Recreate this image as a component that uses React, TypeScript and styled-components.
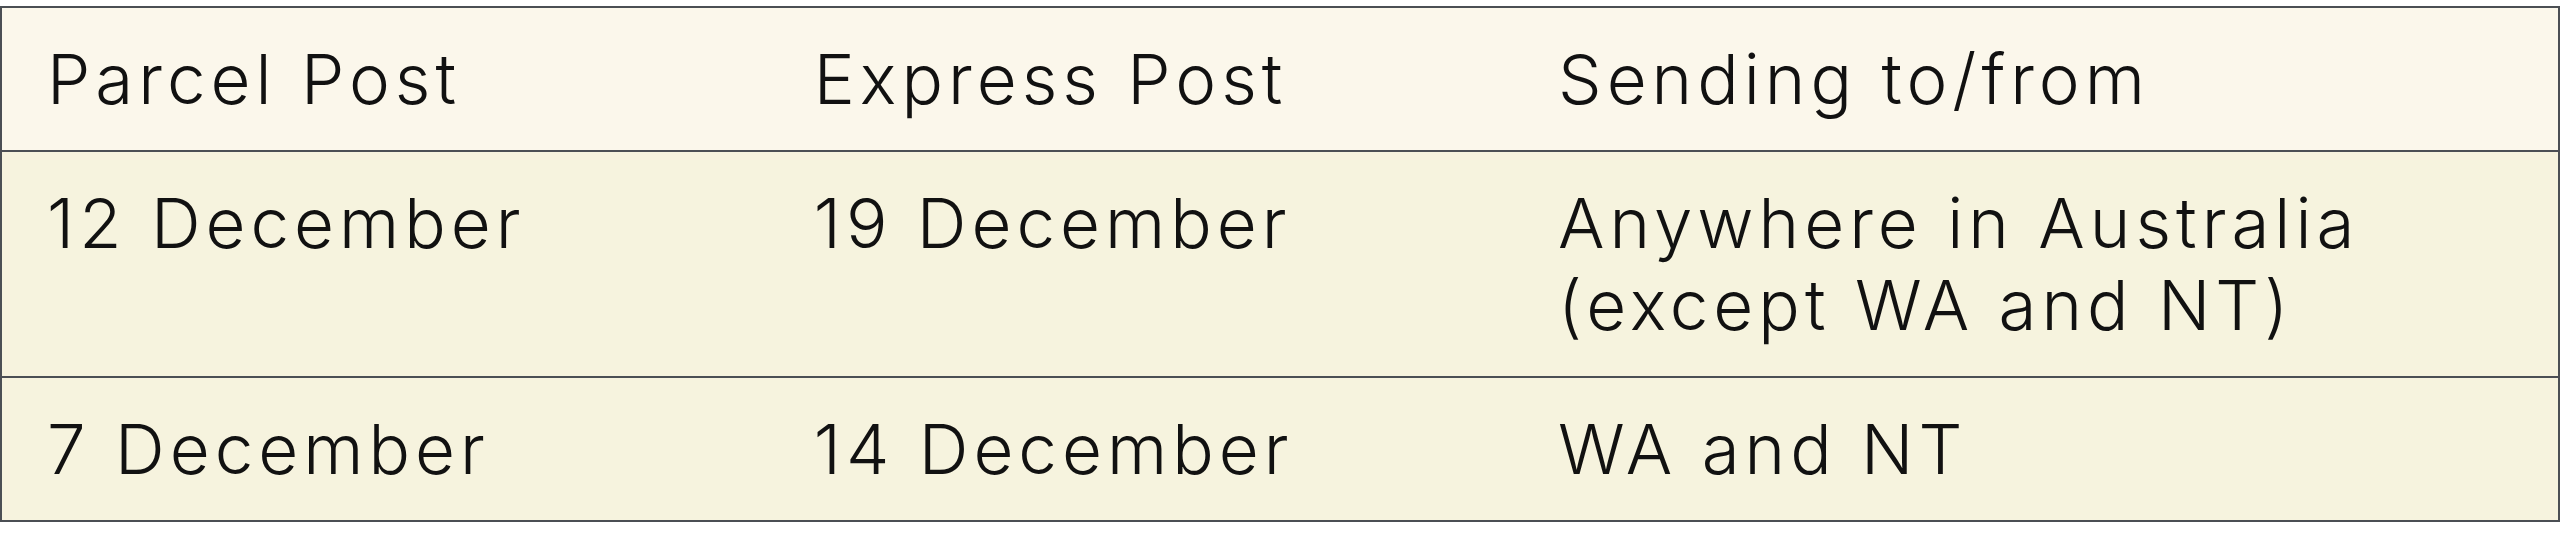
import styled, { createGlobalStyle } from 'styled-components';

const GlobalStyle = createGlobalStyle`
  html, body {
    margin: 0;
    padding: 0;
    background: #ffffff;
  }
`;

type Row = { parcel: string; express: string; place: string[] };

const rows: Row[] = [
  { parcel: '12 December', express: '19 December', place: ['Anywhere in Australia', '(except WA and NT)'] },
  { parcel: '7 December', express: '14 December', place: ['WA and NT'] },
];

const App = () => {
  return (
    <>
      <GlobalStyle />
      <Wrapper>
        <Table>
          <HeadRow>
            <Cell>Parcel Post</Cell>
            <Cell>Express Post</Cell>
            <Cell>Sending to/from</Cell>
          </HeadRow>
          {rows.map((row) => (
            <BodyRow key={row.parcel}>
              <Cell>{row.parcel}</Cell>
              <Cell>{row.express}</Cell>
              <Cell>
                {row.place.map((line) => (
                  <Line key={line}>{line}</Line>
                ))}
              </Cell>
            </BodyRow>
          ))}
        </Table>
      </Wrapper>
    </>
  );
};

const Wrapper = styled.div`
  width: 2560px;
  height: 554px;
  padding-top: 6px;
  box-sizing: border-box;
  background: #ffffff;
`;

const Table = styled.div`
  width: 100%;
  border: 2px solid #4b4f54;
  box-sizing: border-box;
  font-family: Inter, 'Liberation Sans', sans-serif;
  font-weight: 300;
  font-size: 69px;
  line-height: 82px;
  letter-spacing: 5px;
  color: #111111;
`;

const HeadRow = styled.div`
  display: grid;
  grid-template-columns: 30% 29% 41%;
  background: #fbf7eb;
  border-bottom: 2px solid #4b4f54;
`;

const BodyRow = styled(HeadRow)`
  background: #f6f3de;

  &:last-child {
    border-bottom: none;
  }
`;

const Cell = styled.div`
  padding: 30px 44px 30px 45px;

  &:last-child {
    padding-left: 48px;
  }
`;

const Line = styled.div``;

export default App;
